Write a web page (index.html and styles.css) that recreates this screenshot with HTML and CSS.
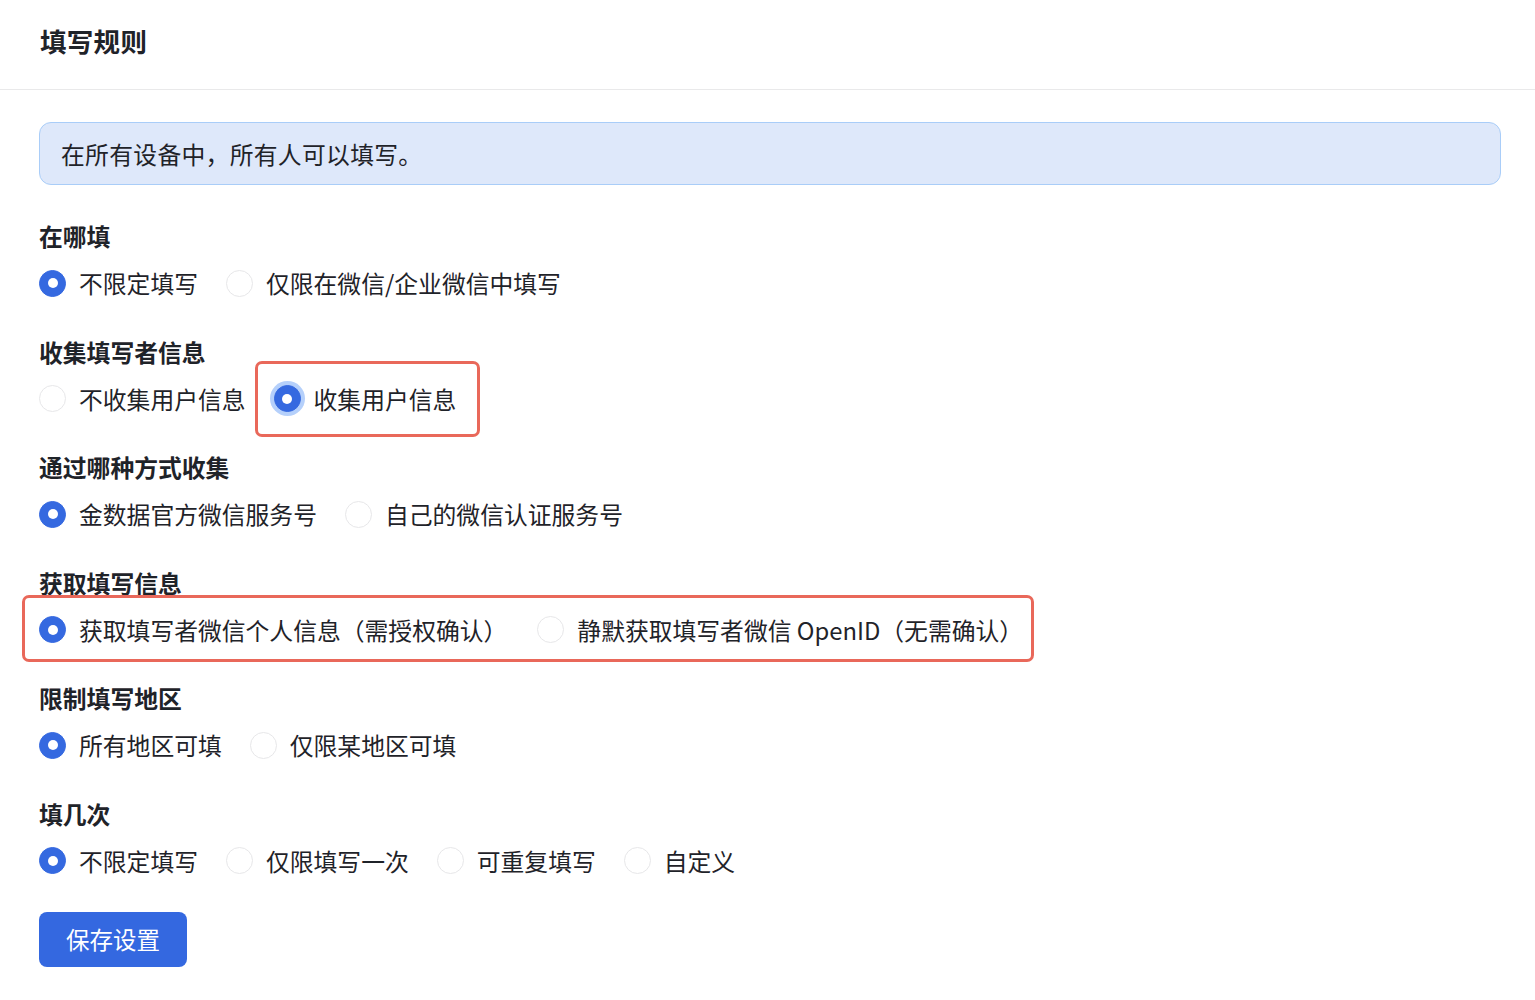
FILE: index.html
```html
<!DOCTYPE html>
<html lang="zh-CN">
<head>
<meta charset="utf-8">
<title>填写规则</title>
<link rel="stylesheet" href="styles.css">
</head>
<body>
<header class="header"><h1 class="title">填写规则</h1></header>
<main class="content">
  <div class="alert">在所有设备中，所有人可以填写。</div>

  <section class="section first">
    <div class="label">在哪填</div>
    <div class="options">
      <span class="option"><span class="radio checked"></span><span class="text">不限定填写</span></span>
      <span class="option"><span class="radio"></span><span class="text">仅限在微信/企业微信中填写</span></span>
    </div>
  </section>

  <section class="section">
    <div class="label">收集填写者信息</div>
    <div class="options">
      <span class="option"><span class="radio"></span><span class="text">不收集用户信息</span></span>
      <span class="option highlight-option"><span class="radio checked focus"></span><span class="text">收集用户信息</span></span>
    </div>
  </section>

  <section class="section">
    <div class="label">通过哪种方式收集</div>
    <div class="options">
      <span class="option"><span class="radio checked"></span><span class="text">金数据官方微信服务号</span></span>
      <span class="option"><span class="radio"></span><span class="text">自己的微信认证服务号</span></span>
    </div>
  </section>

  <section class="section">
    <div class="label">获取填写信息</div>
    <div class="options highlight-row">
      <span class="option"><span class="radio checked"></span><span class="text">获取填写者微信个人信息（需授权确认）</span></span>
      <span class="option"><span class="radio"></span><span class="text">静默获取填写者微信 OpenID（无需确认）</span></span>
    </div>
  </section>

  <section class="section">
    <div class="label">限制填写地区</div>
    <div class="options">
      <span class="option"><span class="radio checked"></span><span class="text">所有地区可填</span></span>
      <span class="option"><span class="radio"></span><span class="text">仅限某地区可填</span></span>
    </div>
  </section>

  <section class="section">
    <div class="label">填几次</div>
    <div class="options">
      <span class="option"><span class="radio checked"></span><span class="text">不限定填写</span></span>
      <span class="option"><span class="radio"></span><span class="text">仅限填写一次</span></span>
      <span class="option"><span class="radio"></span><span class="text">可重复填写</span></span>
      <span class="option"><span class="radio"></span><span class="text">自定义</span></span>
    </div>
  </section>

  <button class="save">保存设置</button>
</main>
</body>
</html>
```
FILE: styles.css
```css
* { box-sizing: border-box; }
html, body {
  margin: 0;
  padding: 0;
  background: #ffffff;
  color: #1f2329;
  font-family: "Noto Sans CJK SC", "Noto Sans", sans-serif;
}
.header {
  height: 90px;
  border-bottom: 1px solid #e9e9ea;
  display: flex;
  align-items: center;
  padding: 0 40px 6px;
}
.title {
  margin: 0;
  font-size: 26.5px;
  font-weight: 700;
  line-height: 1;
  letter-spacing: 0.3px;
}
.content {
  padding: 32px 34px 40px 39px;
  display: flex;
  flex-direction: column;
  align-items: flex-start;
}
.alert {
  width: 100%;
  height: 63px;
  background: #dee8fa;
  border: 1.5px solid #a9cdf8;
  border-radius: 12px;
  display: flex;
  align-items: center;
  padding-left: 21px;
  font-size: 23.8px;
  letter-spacing: 0.3px;
  color: #1f2329;
}
.section {
  margin-top: 37.6px;
  display: flex;
  flex-direction: column;
}
.section.first {
  margin-top: 35px;
}
.label {
  font-size: 23.8px;
  font-weight: 700;
  line-height: 32px;
  height: 32px;
}
.options {
  margin-top: 16px;
  display: flex;
  align-items: center;
  gap: 28px;
  height: 30px;
}
.option {
  display: flex;
  align-items: center;
  gap: 13px;
  font-size: 23.8px;
  line-height: 30px;
  white-space: nowrap;
}
.radio {
  width: 27px;
  height: 27px;
  border-radius: 50%;
  border: 1px solid #e7e7e9;
  background: #fff;
  flex: none;
  position: relative;
}
.radio.checked {
  background: #3569e0;
  border-color: #3569e0;
}
.radio.checked::after {
  content: "";
  position: absolute;
  left: 50%;
  top: 50%;
  width: 10px;
  height: 10px;
  margin: -5px 0 0 -5px;
  border-radius: 50%;
  background: #fff;
}
.radio.focus {
  box-shadow: 0 0 0 4px #b5d0fb;
}
.highlight-option {
  position: relative;
}
.highlight-option::before {
  content: "";
  position: absolute;
  left: -19px;
  right: -24px;
  top: -23px;
  bottom: -23px;
  border: 3.5px solid #e9685a;
  border-radius: 7px;
  pointer-events: none;
}
.highlight-row {
  position: relative;
  gap: 30px;
}
.highlight-row::before {
  content: "";
  position: absolute;
  left: -17px;
  width: 1006px;
  top: -20px;
  bottom: -17px;
  border: 3.5px solid #e9685a;
  border-radius: 7px;
  pointer-events: none;
}
.save {
  margin-top: 36px;
  width: 148px;
  height: 55px;
  border: none;
  border-radius: 8px;
  background: #3468e0;
  color: #fff;
  font-family: inherit;
  font-size: 23.5px;
  cursor: pointer;
}
```
